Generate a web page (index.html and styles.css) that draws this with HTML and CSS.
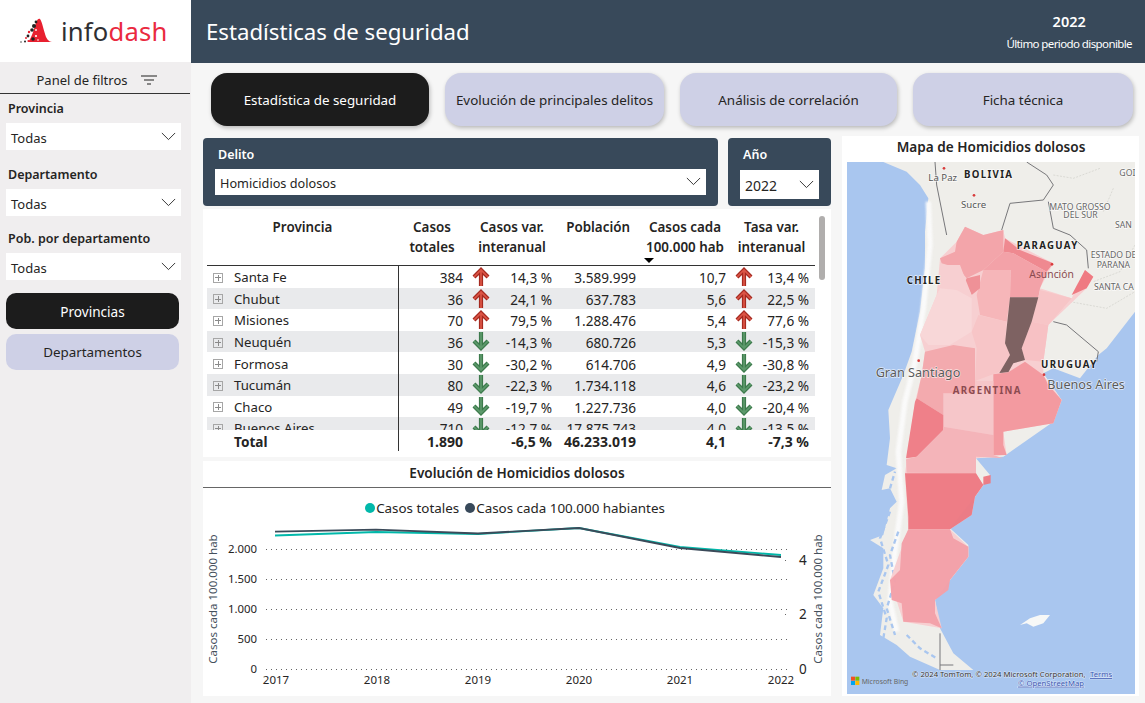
FILE: index.html
```html
<!DOCTYPE html>
<html>

<head>
    <title>Infodash - Estadísticas de seguridad</title>
    <link rel="stylesheet" href="styles.css">
</head>

<body>
    <svg class="icon-defs">
        <defs>
            <g id="arrowUp">
                <path class="arrow-edge red-edge" d="M9 19V4M2 10l7-7 7 7" />
                <path class="arrow-core red-core" d="M9 19V4M2 10l7-7 7 7" />
            </g>
            <g id="arrowDown">
                <path class="arrow-edge green-edge" d="M9 0v15M2 9l7 7 7-7" />
                <path class="arrow-core green-core" d="M9 0v15M2 9l7 7 7-7" />
            </g>
            <g id="chevron">
                <path d="M1 1l7.5 7.5L16 1" fill="none" stroke="#333" stroke-width="1.1" />
            </g>
        </defs>
    </svg>

    <div class="page">
        <aside class="sidebar">
            <div class="logo">
                <svg class="logo-mark" viewBox="0 0 34 25" width="34" height="25">
                    <path d="M8 24C12 20 14 10 16 5C17 1 19 0 20 1C22 3 24 14 26 19C28 23 30 24 33 24Z" fill="#e8202f" />
                    <g fill="#222">
                        <circle cx="14" cy="8" r="2" />
                        <circle cx="12" cy="12" r="1.8" />
                        <circle cx="16" cy="4" r="1.4" />
                        <circle cx="8" cy="18" r="1.4" />
                        <circle cx="13" cy="21" r="1.8" />
                        <circle cx="5" cy="23.5" r="1" />
                        <circle cx="1" cy="24" r=".7" />
                    </g>
                    <g fill="#e8202f">
                        <circle cx="9" cy="14" r="1.2" />
                        <circle cx="6" cy="20" r="1" />
                        <circle cx="8.5" cy="23" r="1.1" />
                    </g>
                    <g fill="#fff">
                        <circle cx="16" cy="12" r=".9" />
                        <circle cx="16" cy="18" r="1.1" />
                        <circle cx="18" cy="22" r=".8" />
                    </g>
                </svg>
                <span class="logo-text">info<span class="logo-accent">dash</span></span>
            </div>
            <div class="panel-title">
                <span>Panel de filtros</span>
                <svg viewBox="0 0 16 10" width="16" height="10">
                    <path d="M0 1h16M3 5h10M6 9h4" stroke="#666" stroke-width="1.6" fill="none" />
                </svg>
            </div>
            <div class="filter">
                <label>Provincia</label>
                <div class="dropdown">Todas<svg viewBox="0 0 17 10" width="15" height="9"><use href="#chevron" /></svg></div>
            </div>
            <div class="filter">
                <label>Departamento</label>
                <div class="dropdown">Todas<svg viewBox="0 0 17 10" width="15" height="9"><use href="#chevron" /></svg></div>
            </div>
            <div class="filter">
                <label>Pob. por departamento</label>
                <div class="dropdown">Todas<svg viewBox="0 0 17 10" width="15" height="9"><use href="#chevron" /></svg></div>
            </div>
            <div class="side-buttons">
                <div class="side-btn active">Provincias</div>
                <div class="side-btn">Departamentos</div>
            </div>
        </aside>

        <main class="main">
            <header class="topbar">
                <h1>Estadísticas de seguridad</h1>
                <div class="period">
                    <div class="period-year">2022</div>
                    <div class="period-note">Último periodo disponible</div>
                </div>
            </header>

            <nav class="tabs">
                <div class="tab active">Estadística de seguridad</div>
                <div class="tab">Evolución de principales delitos</div>
                <div class="tab">Análisis de correlación</div>
                <div class="tab">Ficha técnica</div>
            </nav>

            <div class="content">
                <div class="left-col">
                    <div class="slicers">
                        <div class="slicer">
                            <div class="slicer-label">Delito</div>
                            <div class="dropdown slicer-box">Homicidios dolosos<svg viewBox="0 0 17 10" width="15" height="9"><use href="#chevron" /></svg></div>
                        </div>
                        <div class="slicer">
                            <div class="slicer-label">Año</div>
                            <div class="dropdown slicer-box year-box">2022<svg viewBox="0 0 17 10" width="15" height="9"><use href="#chevron" /></svg></div>
                        </div>
                    </div>

                    <section class="table-card">
                        <div class="scrollbar"></div>
                        <div class="table-divider"></div>
                        <div class="grid-row table-head">
                            <div class="center">Provincia</div>
                            <div class="center totales-head">Casos<br>totales</div>
                            <div class="center span-2 var-head">Casos var.<br>interanual</div>
                            <div class="right pob-head">Población</div>
                            <div class="center sort-head">Casos cada<br>100.000 hab<i class="sort-caret"></i></div>
                            <div class="center span-2 tasa-head">Tasa var.<br>interanual</div>
                        </div>
                        <div class="table-body">
                            <div class="grid-row"><div class="name"><i class="plus"></i>Santa Fe</div><div>384</div><svg class="arrow"><use href="#arrowUp" /></svg><div>14,3 %</div><div>3.589.999</div><div>10,7</div><svg class="arrow"><use href="#arrowUp" /></svg><div>13,4 %</div></div>
                            <div class="grid-row"><div class="name"><i class="plus"></i>Chubut</div><div>36</div><svg class="arrow"><use href="#arrowUp" /></svg><div>24,1 %</div><div>637.783</div><div>5,6</div><svg class="arrow"><use href="#arrowUp" /></svg><div>22,5 %</div></div>
                            <div class="grid-row"><div class="name"><i class="plus"></i>Misiones</div><div>70</div><svg class="arrow"><use href="#arrowUp" /></svg><div>79,5 %</div><div>1.288.476</div><div>5,4</div><svg class="arrow"><use href="#arrowUp" /></svg><div>77,6 %</div></div>
                            <div class="grid-row"><div class="name"><i class="plus"></i>Neuquén</div><div>36</div><svg class="arrow"><use href="#arrowDown" /></svg><div>-14,3 %</div><div>680.726</div><div>5,3</div><svg class="arrow"><use href="#arrowDown" /></svg><div>-15,3 %</div></div>
                            <div class="grid-row"><div class="name"><i class="plus"></i>Formosa</div><div>30</div><svg class="arrow"><use href="#arrowDown" /></svg><div>-30,2 %</div><div>614.706</div><div>4,9</div><svg class="arrow"><use href="#arrowDown" /></svg><div>-30,8 %</div></div>
                            <div class="grid-row"><div class="name"><i class="plus"></i>Tucumán</div><div>80</div><svg class="arrow"><use href="#arrowDown" /></svg><div>-22,3 %</div><div>1.734.118</div><div>4,6</div><svg class="arrow"><use href="#arrowDown" /></svg><div>-23,2 %</div></div>
                            <div class="grid-row"><div class="name"><i class="plus"></i>Chaco</div><div>49</div><svg class="arrow"><use href="#arrowDown" /></svg><div>-19,7 %</div><div>1.227.736</div><div>4,0</div><svg class="arrow"><use href="#arrowDown" /></svg><div>-20,4 %</div></div>
                            <div class="grid-row"><div class="name"><i class="plus"></i>Buenos Aires</div><div>710</div><svg class="arrow"><use href="#arrowDown" /></svg><div>-12,7 %</div><div>17.875.743</div><div>4,0</div><svg class="arrow"><use href="#arrowDown" /></svg><div>-13,5 %</div></div>
                        </div>
                        <div class="grid-row total-row"><div class="name">Total</div><div>1.890</div><span></span><div>-6,5 %</div><div>46.233.019</div><div>4,1</div><span></span><div>-7,3 %</div></div>
                    </section>

                    <section class="chart-card">
                        <div class="card-title chart-title">Evolución de Homicidios dolosos</div>
                        <div class="legend">
                            <span class="legend-item"><i class="dot teal"></i>Casos totales</span>
                            <span class="legend-item"><i class="dot navy"></i>Casos cada 100.000 habiantes</span>
                        </div>
                        <svg class="chart" viewBox="203 520 628 176" width="628" height="176">
                            <g class="grid-lines">
                                <path d="M266 549.5H790M266 579.5H790M266 609.5H790M266 639.5H790M266 669.5H790M785 560.5H790M785 614.5H790" />
                            </g>
                            <g class="axis-left">
                                <text x="257" y="553">2.000</text>
                                <text x="257" y="583">1.500</text>
                                <text x="257" y="613">1.000</text>
                                <text x="257" y="643">500</text>
                                <text x="257" y="673">0</text>
                            </g>
                            <g class="axis-right">
                                <text x="799" y="565">4</text>
                                <text x="799" y="619">2</text>
                                <text x="799" y="674">0</text>
                            </g>
                            <g class="axis-x">
                                <text x="276" y="684">2017</text>
                                <text x="377" y="684">2018</text>
                                <text x="478" y="684">2019</text>
                                <text x="579" y="684">2020</text>
                                <text x="680" y="684">2021</text>
                                <text x="781" y="684">2022</text>
                            </g>
                            <text class="axis-title" transform="translate(217 599) rotate(-90)">Casos cada 100.000 hab</text>
                            <text class="axis-title" transform="translate(822 599) rotate(-90)">Casos cada 100.000 hab</text>
                            <polyline class="line teal-line" points="275,535.5 376,532 478,534 579,528 680,547 781,555" />
                            <polyline class="line navy-line" points="275,531.7 376,529.7 478,533.5 579,528 680,548 781,557" />
                        </svg>
                    </section>
                </div>

                <section class="map-card">
                    <div class="card-title map-title">Mapa de Homicidios dolosos</div>
                    <!-- coordinates are 3x screen pixels, from the top left of the card -->
                    <svg class="map" viewBox="21 81 864 1596" width="288" height="532">
                        <rect x="21" y="81" width="864" height="1596" fill="#a9c6ef" />
                        <polygon class="land" points="130,81 200,110 240,150 265,190 255,290 255,400 240,530 215,650 190,720 160,790 145,825 150,910 140,990 170,1000 135,1020 125,1065 150,1060 170,1100 150,1120 130,1200 90,1215 130,1240 130,1300 100,1380 130,1420 120,1500 170,1530 210,1565 300,1605 400,1605 340,1555 300,1480 285,1395 330,1335 385,1265 385,1230 330,1180 405,1085 430,1050 450,1020 408,970 490,965 640,860 665,795 610,715 640,700 720,730 775,660 800,640 885,530 885,81" />
                        <path class="snow" d="M265 200L270 330L250 520L225 680L195 800L175 950L185 1100L165 1250L150 1400L170 1490" />
                        <path class="fjords" d="M150 1130L120 1210L145 1290L115 1370L140 1450L130 1510M175 1190L150 1260L165 1340L140 1420L165 1500M200 1500L240 1540L290 1570M150 1060L165 1010" />
                        <polygon fill="#f7f8f7" points="540,1470 570,1450 600,1440 630,1440 610,1465 580,1475 560,1465" />
                        <path class="map-border" d="M285 81L290 150L320 300M560 81L620 120L640 150L610 195L510 205L485 285M625 200L640 280L690 300L740 345L745 400M640 560L680 570L775 650L770 680M300 1495V1605M300 1590H340" />
                        <path class="map-border thin" d="M640 120L700 130L780 100M820 160L790 230M885 330L840 410L760 440M690 500L800 520L885 470" />

                        <g class="provinces">
                            <polygon fill="#f8cfd1" points="350,320 375,275 430,300 490,285 495,310 640,385 600,460 695,490 735,405 760,425 740,460 625,570 610,680 610,720 665,795 640,865 490,890 500,960 408,970 408,1015 430,1050 405,1085 395,1140 330,1183 385,1235 385,1265 330,1335 285,1395 305,1480 190,1460 150,1335 205,1183 195,1015 225,800 245,720 255,650 240,600 290,480 300,370" />
                            <polygon fill="#f4a3a8" points="350,320 375,275 430,300 490,285 490,350 430,405 380,430 355,400 305,385 300,370 345,350" />
                            <polygon fill="#f0868e" points="495,310 540,345 640,385 620,410 520,355 490,350" />
                            <polygon fill="#f4a0a6" points="430,405 490,350 520,355 620,410 600,460 595,487 510,487 512,405" />
                            <polygon fill="#f7b5b8" points="430,405 512,405 510,487 500,560 420,540 410,480" />
                            <polygon fill="#ef8f95" points="380,430 420,420 420,460 395,480 375,440" />
                            <polygon fill="#f8cfd1" points="305,390 360,390 375,430 395,480 350,465 300,460" />
                            <polygon fill="#f9d7d8" points="300,460 350,465 395,490 395,590 330,630 265,630 240,600 290,480" />
                            <polygon fill="#f8c4c6" points="415,540 500,560 495,625 510,660 480,710 405,738 410,640 395,590" />
                            <polygon fill="#f8c4c6" points="600,465 695,490 625,570 575,560 595,487" />
                            <polygon fill="#f8c0c3" points="575,560 625,570 610,680 555,675 545,640" />
                            <polygon fill="#7b5e5e" points="510,487 595,487 575,560 545,640 555,675 520,685 505,712 478,714 510,660 495,625" />
                            <polygon fill="#f0777f" points="695,480 735,405 760,425 740,460" />
                            <polygon fill="#f4989e" points="460,718 505,712 555,680 610,720 625,750 665,795 640,865 490,890 490,930 500,960 460,960" />
                            <polygon fill="#f7c5c8" points="310,775 405,775 405,738 460,738 460,900 310,875" />
                            <polygon fill="#f4a8ad" points="255,650 340,630 405,640 405,775 310,775 310,840 230,790 245,720" />
                            <polygon fill="#ef7d86" points="230,790 310,840 310,885 230,965 198,970 225,800" />
                            <polygon fill="#f5b3b8" points="310,875 460,900 460,960 490,970 408,965 408,1015 200,1013 198,973 230,965 310,885" />
                            <polygon fill="#ee7a83" points="195,1015 408,1015 430,1050 405,1085 395,1140 330,1183 205,1183 205,1145" />
                            <polygon fill="#ee7a83" points="430,1025 452,1020 452,1045 430,1050" />
                            <polygon fill="#f4a0a8" points="205,1183 330,1183 340,1210 385,1235 385,1265 330,1335 325,1365 285,1395 285,1435 305,1480 270,1465 190,1460 185,1405 155,1395 150,1335 180,1305 185,1225" />
                        </g>

                        <g class="map-label">
                            <text class="small" x="265" y="139">La Paz</text>
                            <text class="strong" x="372" y="128">BOLIVIA</text>
                            <text class="small" x="363" y="220">Sucre</text>
                            <text class="tiny" x="628" y="224">MATO GROSSO</text>
                            <text class="tiny" x="670" y="250">DEL SUR</text>
                            <text class="tiny" x="838" y="124">GOI</text>
                            <text class="tiny" x="825" y="280">SAN</text>
                            <text class="strong" x="530" y="343">PARAGUAY</text>
                            <text class="asuncion" x="568" y="430">Asunción</text>
                            <text class="tiny" x="752" y="369">ESTADO DE</text>
                            <text class="tiny" x="770" y="398">PARANA</text>
                            <text class="tiny" x="762" y="464">SANTA CA</text>
                            <text class="strong" x="200" y="446">CHILE</text>
                            <text class="strong" x="603" y="700">URUGUAY</text>
                            <text class="big" x="107" y="725">Gran Santiago</text>
                            <text class="big" x="622" y="762">Buenos Aires</text>
                            <text class="strong tinted" x="338" y="776">ARGENTINA</text>
                        </g>
                        <g fill="#d83b3b">
                            <circle cx="312" cy="100" r="4" />
                            <circle cx="402" cy="181" r="4" />
                            <circle cx="236" cy="677" r="4" />
                            <circle cx="612" cy="719" r="4" />
                            <circle cx="636" cy="388" r="4" />
                        </g>

                        <rect x="33" y="1625" width="12" height="12" fill="#f25022" />
                        <rect x="46" y="1625" width="12" height="12" fill="#7fba00" />
                        <rect x="33" y="1638" width="12" height="12" fill="#00a4ef" />
                        <rect x="46" y="1638" width="12" height="12" fill="#ffb900" />
                        <text class="bing" x="65" y="1646">Microsoft Bing</text>
                        <text class="credit" x="216" y="1626">© 2024 TomTom, © 2024 Microsoft Corporation,</text>
                        <text class="credit link" x="750" y="1626">Terms</text>
                        <text class="credit link" x="534" y="1652">© OpenStreetMap</text>
                    </svg>
                </section>
            </div>
        </main>
    </div>
</body>

</html>
```

FILE: styles.css
```css
* {
    box-sizing: border-box;
}

body {
    margin: 0;
    font-family: "Noto Sans", Arial, sans-serif;
    font-size: 13px;
    color: #252423;
    background: #f6f6f6;
}

.icon-defs {
    display: block;
    width: 0;
    height: 0;
}

.page {
    display: grid;
    grid-template-columns: 191px 1fr;
    width: 1145px;
    height: 703px;
    overflow: hidden;
}

/* sidebar */
.sidebar {
    background: #f0eeef;
}

.logo {
    height: 62px;
    background: white;
    display: flex;
    align-items: center;
    padding: 1px 0 0 20px;
}

.logo-mark {
    margin-right: 7px;
    margin-top: -2px;
}

.logo-text {
    font-size: 25.6px;
    line-height: 30px;
    color: #2f2f33;
    letter-spacing: 0.2px;
}

.logo-accent {
    color: #ea2a3f;
}

.panel-title {
    height: 32px;
    margin-right: 1px;
    border-bottom: 1px solid #333;
    display: flex;
    align-items: center;
    justify-content: center;
    gap: 13px;
    font-size: 13px;
    padding: 4px 0 0 3px;
}

.filter label {
    display: block;
    height: 29px;
    padding: 6px 0 0 8px;
    line-height: 18px;
    font-weight: 600;
    font-size: 12.5px;
}

.filter {
    margin-bottom: 8px;
}

.filter:nth-child(3) {
    margin-bottom: 10px;
}

.dropdown {
    display: flex;
    align-items: center;
    justify-content: space-between;
    background: white;
    height: 27px;
    margin: 0 10px 0 6px;
    padding: 2px 5px 0 5px;
    font-size: 13px;
}

.dropdown svg {
    margin-top: -3px;
}

.side-buttons {
    display: flex;
    flex-direction: column;
    gap: 5px;
    margin: 13px 12px 0 6px;
}

.side-btn {
    height: 36px;
    display: flex;
    align-items: center;
    justify-content: center;
    border-radius: 10px;
    background: #ced0e6;
    font-size: 13.4px;
}

.side-btn.active {
    background: #1c1c1c;
    color: white;
    font-size: 13.6px;
}

/* top bar and tabs */
.topbar {
    height: 63px;
    background: #38495a;
    color: white;
    display: flex;
    align-items: center;
    justify-content: space-between;
    padding: 0 13px 0 15px;
}

.topbar h1 {
    margin: 0;
    font-size: 22.2px;
    font-weight: 400;
}

.period {
    text-align: center;
    margin-top: 2px;
}

.period-year {
    font-size: 14.5px;
    font-weight: 600;
    line-height: 22px;
}

.period-note {
    font-size: 11.5px;
    letter-spacing: -0.6px;
    line-height: 24px;
}

.tabs {
    display: grid;
    grid-template-columns: 218px 219px 217px 220px;
    gap: 16px;
    margin: 10px 0 0 20px;
}

.tab {
    height: 53px;
    display: flex;
    align-items: center;
    justify-content: center;
    border-radius: 16px;
    background: #ced0e6;
    font-size: 13.4px;
    box-shadow: 1px 2px 4px rgba(0, 0, 0, 0.25);
}

.tab.active {
    background: #1c1c1c;
    color: white;
}

/* content */
.content {
    display: grid;
    grid-template-columns: 628px 297px;
    gap: 11px;
    margin: 10px 0 0 12px;
}

.left-col {
    padding-top: 2px;
}

.slicers {
    display: grid;
    grid-template-columns: 515px 103px;
    gap: 10px;
}

.slicer {
    background: #38495a;
    border-radius: 4px;
    padding: 8px 12px 11px;
    height: 68px;
}

.slicer-label {
    color: white;
    font-weight: 600;
    font-size: 12.5px;
    line-height: 18px;
    height: 23px;
    padding-left: 3px;
}

.slicer-box {
    margin: 0;
    height: 26px;
    font-size: 12.7px;
}

.year-box {
    height: 29px;
    margin-top: 1px;
    font-size: 14px;
}

.card-title {
    text-align: center;
    font-weight: 600;
    font-size: 13.6px;
}

/* table */
.table-card {
    position: relative;
    height: 248px;
    margin-top: 3px;
    background: white;
    padding-left: 4px;
}

.scrollbar {
    position: absolute;
    left: 616px;
    top: 7px;
    width: 6px;
    height: 64px;
    border-radius: 3px;
    background: #b0aead;
}

.table-divider {
    position: absolute;
    left: 195px;
    top: 57px;
    width: 1px;
    height: 185px;
    background: #333;
    z-index: 1;
}

.grid-row {
    display: grid;
    grid-template-columns: 191px 68px 30px 56px 84px 90px 36px 47px;
    width: 608px;
    text-align: right;
    align-items: center;
    height: 21.6px;
    line-height: 19px;
    font-size: 13.6px;
}

.table-body .grid-row {
    padding-top: 2px;
}

.table-body .grid-row:nth-child(even) {
    background: #e9eaec;
}

.grid-row > div:nth-child(2) {
    padding-right: 3px;
}

.table-head {
    height: 57px;
    align-items: start;
    padding-top: 8px;
    line-height: 20px;
    font-weight: 600;
    font-size: 13.4px;
    border-bottom: 1px solid #333;
}

.center {
    text-align: center;
}

.right {
    text-align: right;
}

.span-2 {
    grid-column: span 2;
}

.grid-row > .totales-head {
    padding: 0 0 0 3px;
}

.var-head {
    padding-left: 6px;
}

.pob-head {
    padding-right: 6px;
}

.sort-head,
.tasa-head {
    padding-left: 8px;
}

.sort-caret {
    display: block;
    width: 0;
    height: 0;
    margin: 1px 0 0;
    border-style: solid;
    border-width: 5px 5px 0;
    border-color: black transparent transparent;
}

.table-body {
    height: 164px;
    overflow: hidden;
}

.name {
    display: flex;
    align-items: center;
    text-align: left;
    padding-left: 27px;
    font-size: 13.2px;
}

.table-body .name {
    padding-left: 6px;
}

.plus {
    width: 10px;
    height: 10px;
    margin-right: 11px;
    border: 1px solid #a6a6a6;
    background: linear-gradient(#8a8a8a, #8a8a8a) center / 6px 1px no-repeat,
        linear-gradient(#8a8a8a, #8a8a8a) center / 1px 6px no-repeat;
}

.arrow {
    width: 18px;
    height: 19px;
    margin: -2px auto 0;
    overflow: visible;
}

.arrow-edge,
.arrow-core {
    fill: none;
}

.arrow-edge {
    stroke-width: 4.2;
}

.arrow-core {
    stroke-width: 1.7;
}

.red-edge {
    stroke: #a52a20;
}

.red-core {
    stroke: #dc5546;
}

.green-edge {
    stroke: #3d7a4c;
}

.green-core {
    stroke: #5d9a6c;
}

.total-row {
    font-weight: 700;
    font-size: 14px;
    height: 21px;
    padding-top: 2px;
}

.total-row .name {
    font-size: 13.6px;
}

/* line chart */
.chart-card {
    height: 235px;
    margin-top: 4px;
    background: white;
}

.chart-title {
    height: 27px;
    line-height: 23px;
    border-bottom: 1px solid #666;
}

.legend {
    height: 32px;
    display: flex;
    justify-content: center;
    align-items: center;
    gap: 6px;
    padding: 7px 4px 0 0;
    font-size: 13.4px;
}

.legend-item {
    display: flex;
    align-items: center;
    gap: 1px;
}

.dot {
    width: 10px;
    height: 10px;
    border-radius: 50%;
}

.teal {
    background: #01b8aa;
}

.navy {
    background: #38495a;
}

.chart {
    display: block;
}

.grid-lines path {
    fill: none;
    stroke: #666;
    stroke-dasharray: 1 4;
}

.axis-left text {
    font-size: 11.4px;
    text-anchor: end;
    fill: #252423;
}

.axis-right text {
    font-size: 13.5px;
    fill: #252423;
}

.axis-x text {
    font-size: 11.5px;
    text-anchor: middle;
    fill: #252423;
}

.axis-title {
    font-size: 11.5px;
    text-anchor: middle;
    fill: #44505c;
}

.line {
    fill: none;
    stroke-width: 1.8;
}

.teal-line {
    stroke: #01b8aa;
}

.navy-line {
    stroke: #3b4a59;
}

/* map */
.map-card {
    height: 560px;
    background: white;
    padding: 0 4px 0 5px;
}

.map-title {
    height: 26px;
    line-height: 22px;
}

.map {
    display: block;
}

.land {
    fill: #efeeea;
    filter: blur(1.5px);
}

.snow {
    fill: none;
    stroke: #fafafa;
    stroke-width: 16;
    filter: blur(3px);
}

.fjords {
    fill: none;
    stroke: #a9c6ef;
    stroke-width: 7;
    stroke-dasharray: 14 10;
    filter: blur(1.5px);
}

.provinces {
    opacity: 0.97;
    filter: blur(1px);
}

.map-border {
    fill: none;
    stroke: #77777a;
    stroke-width: 3;
}

.map-border.thin {
    stroke: #cfcfc9;
    stroke-width: 2;
    stroke-dasharray: 6 4;
}

.map-label text {
    fill: #4f4f4f;
    paint-order: stroke;
    stroke: rgba(255, 255, 255, 0.7);
    stroke-width: 4px;
}

.map-label .strong {
    font-size: 29px;
    font-weight: 700;
    letter-spacing: 4px;
    fill: #222;
}

.map-label .small {
    font-size: 29px;
    fill: #555;
}

.map-label .tiny {
    font-size: 26px;
    fill: #666;
}

.map-label .big {
    font-size: 38px;
    fill: #5a5a5a;
}

.map-label .asuncion {
    font-size: 31px;
    fill: #8b4b50;
    stroke: none;
}

.map-label .tinted {
    fill: #8b4b50;
    stroke: none;
}

.bing {
    font-size: 20.5px;
    fill: #666;
}

.credit {
    font-size: 23.2px;
    fill: #333;
    paint-order: stroke;
    stroke: rgba(255, 255, 255, 0.6);
    stroke-width: 3px;
}

.credit.link {
    fill: #3a55b0;
    text-decoration: underline;
}
```
